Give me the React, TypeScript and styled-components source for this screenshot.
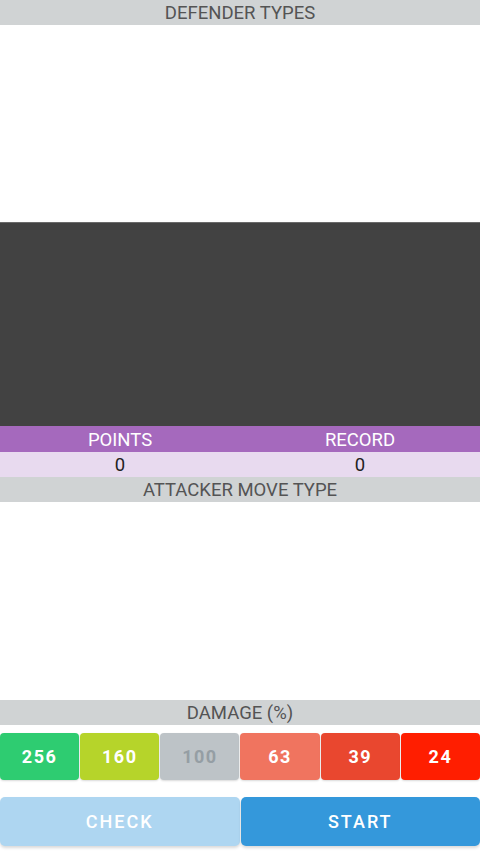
import React from "react";
import styled, { createGlobalStyle } from "styled-components";

const Global = createGlobalStyle`
  html, body { margin: 0; padding: 0; background: #ffffff; }
  body { font-family: Roboto, "Noto Sans", Arial, sans-serif; }
  * { box-sizing: border-box; }
`;

const Screen = styled.div`
  width: 480px;
  height: 853px;
  display: flex;
  flex-direction: column;
  background: #ffffff;
  overflow: hidden;
`;

const SectionHeader = styled.div`
  height: 25px;
  background: #d0d3d4;
  color: #545454;
  font-size: 18.5px;
  line-height: 27px;
  text-align: center;
  flex-shrink: 0;
  overflow: hidden;
`;

const Blank = styled.div<{ $h: number }>`
  height: ${(p) => p.$h}px;
  background: #ffffff;
  flex-shrink: 0;
`;

const Board = styled.div`
  height: 204px;
  background: #424242;
  border-top: 1px solid #6a6a6a;
  flex-shrink: 0;
`;

const ScoreRow = styled.div<{ $head?: boolean }>`
  height: ${(p) => (p.$head ? 26 : 25)}px;
  display: grid;
  grid-template-columns: 1fr 1fr;
  background: ${(p) => (p.$head ? "#a569bd" : "#e8daef")};
  color: ${(p) => (p.$head ? "#ffffff" : "#222222")};
  font-size: 18.5px;
  line-height: ${(p) => (p.$head ? 28 : 27)}px;
  text-align: center;
  flex-shrink: 0;
  overflow: hidden;
`;

const DamageRow = styled.div`
  display: grid;
  grid-template-columns: repeat(6, 1fr);
  column-gap: 1px;
  margin-top: 8px;
  height: 47px;
  flex-shrink: 0;
`;

const DamageButton = styled.div<{ $bg: string; $fg: string }>`
  background: ${(p) => p.$bg};
  color: ${(p) => p.$fg};
  border-radius: 4px;
  display: flex;
  align-items: center;
  justify-content: center;
  font-size: 18px;
  font-weight: 700;
  letter-spacing: 1.5px;
  box-shadow: 0 1px 2px rgba(0, 0, 0, 0.15);
`;

const ActionRow = styled.div`
  display: grid;
  grid-template-columns: 1fr 1fr;
  column-gap: 1px;
  margin-top: 17px;
  height: 49px;
  flex-shrink: 0;
`;

const ActionButton = styled.div<{ $bg: string }>`
  background: ${(p) => p.$bg};
  color: #ffffff;
  border-radius: 5px;
  display: flex;
  align-items: center;
  justify-content: center;
  font-size: 18px;
  font-weight: 500;
  letter-spacing: 2px;
  box-shadow: 0 2px 3px rgba(0, 0, 0, 0.15);
`;

const damages = [
  { v: "256", bg: "#2ecc71", fg: "#ffffff" },
  { v: "160", bg: "#b6d42a", fg: "#ffffff" },
  { v: "100", bg: "#bdc3c7", fg: "#959ea4" },
  { v: "63", bg: "#f0745f", fg: "#ffffff" },
  { v: "39", bg: "#e9472f", fg: "#ffffff" },
  { v: "24", bg: "#ff1e00", fg: "#ffffff" },
];

export default function App() {
  return (
    <Screen>
      <Global />
      <SectionHeader>DEFENDER TYPES</SectionHeader>
      <Blank $h={197} />
      <Board />
      <ScoreRow $head>
        <span>POINTS</span>
        <span>RECORD</span>
      </ScoreRow>
      <ScoreRow>
        <span>0</span>
        <span>0</span>
      </ScoreRow>
      <SectionHeader>ATTACKER MOVE TYPE</SectionHeader>
      <Blank $h={198} />
      <SectionHeader>DAMAGE (%)</SectionHeader>
      <DamageRow>
        {damages.map((d) => (
          <DamageButton key={d.v} $bg={d.bg} $fg={d.fg}>
            {d.v}
          </DamageButton>
        ))}
      </DamageRow>
      <ActionRow>
        <ActionButton $bg="#aed6f1">CHECK</ActionButton>
        <ActionButton $bg="#3498db">START</ActionButton>
      </ActionRow>
    </Screen>
  );
}
